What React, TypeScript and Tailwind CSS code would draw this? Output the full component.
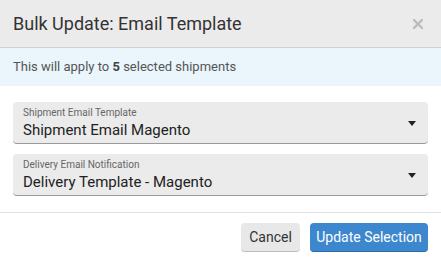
function SelectField({ label, value }: { label: string; value: string }) {
  return (
    <div className="relative flex h-[42px] flex-col rounded-[4px] border-b border-[#9a9a9a] bg-[#ebebeb] px-[10px] pt-[5px]">
      <span className="text-[10px] leading-[12px] text-[#666]">{label}</span>
      <span className="text-[15px] leading-[22px] text-[#222]">{value}</span>
      <svg
        className="absolute right-[12px] top-[19px]"
        width="8"
        height="5"
        viewBox="0 0 8 5"
      >
        <path d="M0 0h8L4 5z" fill="#222" />
      </svg>
    </div>
  );
}

export default function App() {
  return (
    <div
      className="h-[260px] w-[441px] overflow-hidden bg-white"
      style={{ fontFamily: "Roboto, 'Liberation Sans', sans-serif" }}
    >
      <div className="flex h-[48px] items-center justify-between border-b border-[#cfcfcf] bg-[#ebebeb] pl-[13px] pr-[18px] shadow-[0_1px_2px_rgba(0,0,0,0.08)]">
        <h1 className="text-[18px] text-[#333]">Bulk Update: Email Template</h1>
        <svg width="10" height="10" viewBox="0 0 10 10">
          <path
            d="M1 1l8 8M9 1l-8 8"
            stroke="#bdbdbd"
            strokeWidth="2.4"
            strokeLinecap="square"
          />
        </svg>
      </div>

      <div className="flex h-[38px] items-center bg-[#eaf5fc] px-[13px] text-[13px] text-[#555]">
        <span>
          This will apply to <b className="font-bold text-[#444]">5</b> selected
          shipments
        </span>
      </div>

      <div className="flex flex-col gap-[10px] px-[13px] pb-[16px] pt-[16px]">
        <SelectField
          label="Shipment Email Template"
          value="Shipment Email Magento"
        />
        <SelectField
          label="Delivery Email Notification"
          value="Delivery Template - Magento"
        />
      </div>

      <div className="flex justify-end gap-[10px] border-t border-[#e0e0e0] px-[13px] pt-[10px]">
        <button className="h-[29px] w-[59px] rounded-[4px] border-b border-[#bdbdbd] bg-[#e8e8e8] text-[14px] text-[#333]">
          Cancel
        </button>
        <button className="h-[29px] w-[118px] rounded-[4px] border-b border-[#2a6aa5] bg-[#3c87cd] text-[14px] text-white">
          Update Selection
        </button>
      </div>
    </div>
  );
}
